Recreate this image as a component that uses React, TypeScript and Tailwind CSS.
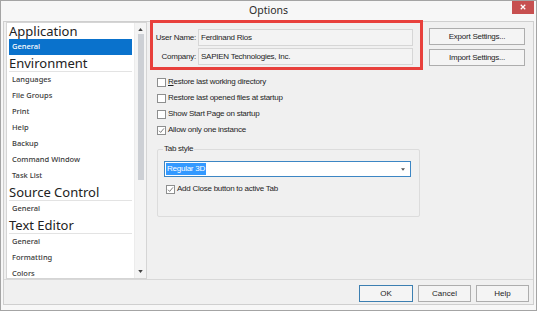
import React from "react"

const groups = [
  { title: "Application", items: ["General"], line: false },
  {
    title: "Environment",
    items: ["Languages", "File Groups", "Print", "Help", "Backup", "Command Window", "Task List"],
    line: true,
  },
  { title: "Source Control", items: ["General"], line: true },
  { title: "Text Editor", items: ["General", "Formatting", "Colors"], line: true },
]

function Check({ checked }: { checked?: boolean }) {
  return (
    <span className="w-[9px] h-[9px] border border-[#8e8f8f] bg-white flex items-center justify-center shrink-0">
      {checked && (
        <svg viewBox="0 0 8 8" className="w-[7px] h-[7px]">
          <path d="M1.2 4.3 L3 6.2 L6.8 1.6" fill="none" stroke="#6a6a6a" strokeWidth="1" />
        </svg>
      )}
    </span>
  )
}

function CheckRow({ label, checked, first }: { label: string; checked?: boolean; first?: boolean }) {
  return (
    <div className="h-[16px] flex items-center gap-[2px]">
      <Check checked={checked} />
      <span>
        {first ? (
          <>
            <span className="underline">R</span>
            {label.slice(1)}
          </>
        ) : (
          label
        )}
      </span>
    </div>
  )
}

function Btn({ children, main, w }: { children: React.ReactNode; main?: boolean; w: string }) {
  return (
    <div
      className={`${w} h-[17px] flex items-center justify-center bg-[#f4f4f4] border ${
        main ? "border-[#3c7fb1]" : "border-[#adadad]"
      }`}
    >
      {children}
    </div>
  )
}

export default function App() {
  return (
    <div className="w-[537px] h-[311px] bg-[#f7f7f7] border border-[#a4a4a4] flex flex-col overflow-hidden">
      {/* title bar */}
      <div className="h-[20px] shrink-0 relative flex items-center justify-center">
        <span className="font-['Noto_Sans',sans-serif] text-[10.5px] text-[#2b2b2b] mt-[-1px]">Options</span>
        <div className="absolute right-[2px] top-[-1px] w-[22px] h-[14px] bg-[#c75050] flex items-center justify-center">
          <svg viewBox="0 0 8 8" className="w-[6px] h-[6px]">
            <path d="M1 1 L7 7 M7 1 L1 7" stroke="white" strokeWidth="1.6" />
          </svg>
        </div>
      </div>

      {/* client area */}
      <div className="mx-[2px] mb-[5px] h-[284px] border border-[#cfcfcf] bg-[#f0f0f0] flex flex-col">
        <div className="h-[257px] flex">
          {/* tree list */}
          <div className="ml-[2px] w-[141px] h-full border border-[#d5d5d5] bg-white flex overflow-hidden">
            <div className="flex-1 pl-[2px] pr-[2px] font-['Noto_Sans',sans-serif] text-[#3a3a3a]">
              {groups.map((g) => (
                <div key={g.title}>
                  <div
                    className={`${g.line ? "h-[17px] border-b border-[#e3e3e3]" : "h-[16px]"} flex items-center text-[13px] leading-none text-[#222]`}
                  >
                    {g.title}
                  </div>
                  {g.items.map((it, i) => {
                    const sel = g.title === "Application" && i === 0
                    return (
                      <div
                        key={it + i}
                        className={`h-[16px] pl-[3px] flex items-center text-[7.5px] font-medium ${
                          sel ? "bg-[#0a72cc] text-white" : ""
                        }`}
                      >
                        {it}
                      </div>
                    )
                  })}
                </div>
              ))}
            </div>
            {/* scrollbar */}
            <div className="w-[12px] h-full bg-[#f4f4f4] border-l border-[#ececec] flex flex-col items-center">
              <svg viewBox="0 0 6 4" className="w-[5px] h-[3px] mt-[5px]">
                <path d="M0 4 L3 0 L6 4 Z" fill="#444" />
              </svg>
              <div className="w-[6px] h-[146px] mt-[3px] bg-[#cdd0d5]" />
              <div className="flex-1" />
              <svg viewBox="0 0 6 4" className="w-[5px] h-[3px] mb-[5px]">
                <path d="M0 0 L6 0 L3 4 Z" fill="#444" />
              </svg>
            </div>
          </div>

          {/* right pane */}
          <div className="flex-1 font-['Liberation_Sans',Arial,sans-serif] text-[8px] tracking-[-0.25px] text-[#1e1e1e]">
            <div className="flex items-start">
              <div className="ml-[3px] mt-[-2px] w-[273px] h-[50px] border-[3px] border-[#e8403c] pt-[6px] pr-[7px] flex flex-col gap-[2px]">
                <div className="flex items-center">
                  <span className="w-[45px] text-right pr-[2px]">User Name:</span>
                  <div className="flex-1 h-[17px] border border-[#d6d6d6] bg-[#f3f3f3] flex items-center pl-[2px]">
                    Ferdinand Rios
                  </div>
                </div>
                <div className="flex items-center">
                  <span className="w-[45px] text-right pr-[2px]">Company:</span>
                  <div className="flex-1 h-[17px] border border-[#d6d6d6] bg-[#f3f3f3] flex items-center pl-[2px]">
                    SAPIEN Technologies, Inc.
                  </div>
                </div>
              </div>
              <div className="ml-[6px] mt-[6px] flex flex-col gap-[4px]">
                <Btn w="w-[96px]">Export Settings...</Btn>
                <Btn w="w-[96px]">Import Settings...</Btn>
              </div>
            </div>

            <div className="ml-[10px] mt-[4px]">
              <CheckRow label="Restore last working directory" first />
              <CheckRow label="Restore last opened files at startup" />
              <CheckRow label="Show Start Page on startup" />
              <CheckRow label="Allow only one instance" checked />
            </div>

            <fieldset className="ml-[10px] mt-[5px] w-[263px] h-[74px] border border-[#dcdcdc] rounded-[2px] pl-[6px] pr-[8px]">
              <legend className="ml-[-1px] px-[1px] leading-[12px]">Tab style</legend>
              <div className="h-[16px] mt-[6px] border border-[#3c86c4] bg-white flex items-center pl-[1px] pr-[5px]">
                <span className="bg-[#3399ff] text-white h-[12px] flex items-center px-[1px]">Regular 3D</span>
                <div className="flex-1" />
                <svg viewBox="0 0 6 4" className="w-[4px] h-[3px]">
                  <path d="M0 0 L6 0 L3 4 Z" fill="#555" />
                </svg>
              </div>
              <div className="mt-[4px] ml-[2px]">
                <CheckRow label="Add Close button to active Tab" checked />
              </div>
            </fieldset>
          </div>
        </div>

        {/* footer */}
        <div className="flex-1 border-t border-[#d8d8d8] flex justify-end items-start pt-[5px] pr-[4px] gap-[5px] font-['Liberation_Sans',Arial,sans-serif] text-[8px] text-[#1e1e1e]">
          <Btn w="w-[54px]" main>
            OK
          </Btn>
          <Btn w="w-[53px]">Cancel</Btn>
          <Btn w="w-[53px]">Help</Btn>
        </div>
      </div>
    </div>
  )
}
